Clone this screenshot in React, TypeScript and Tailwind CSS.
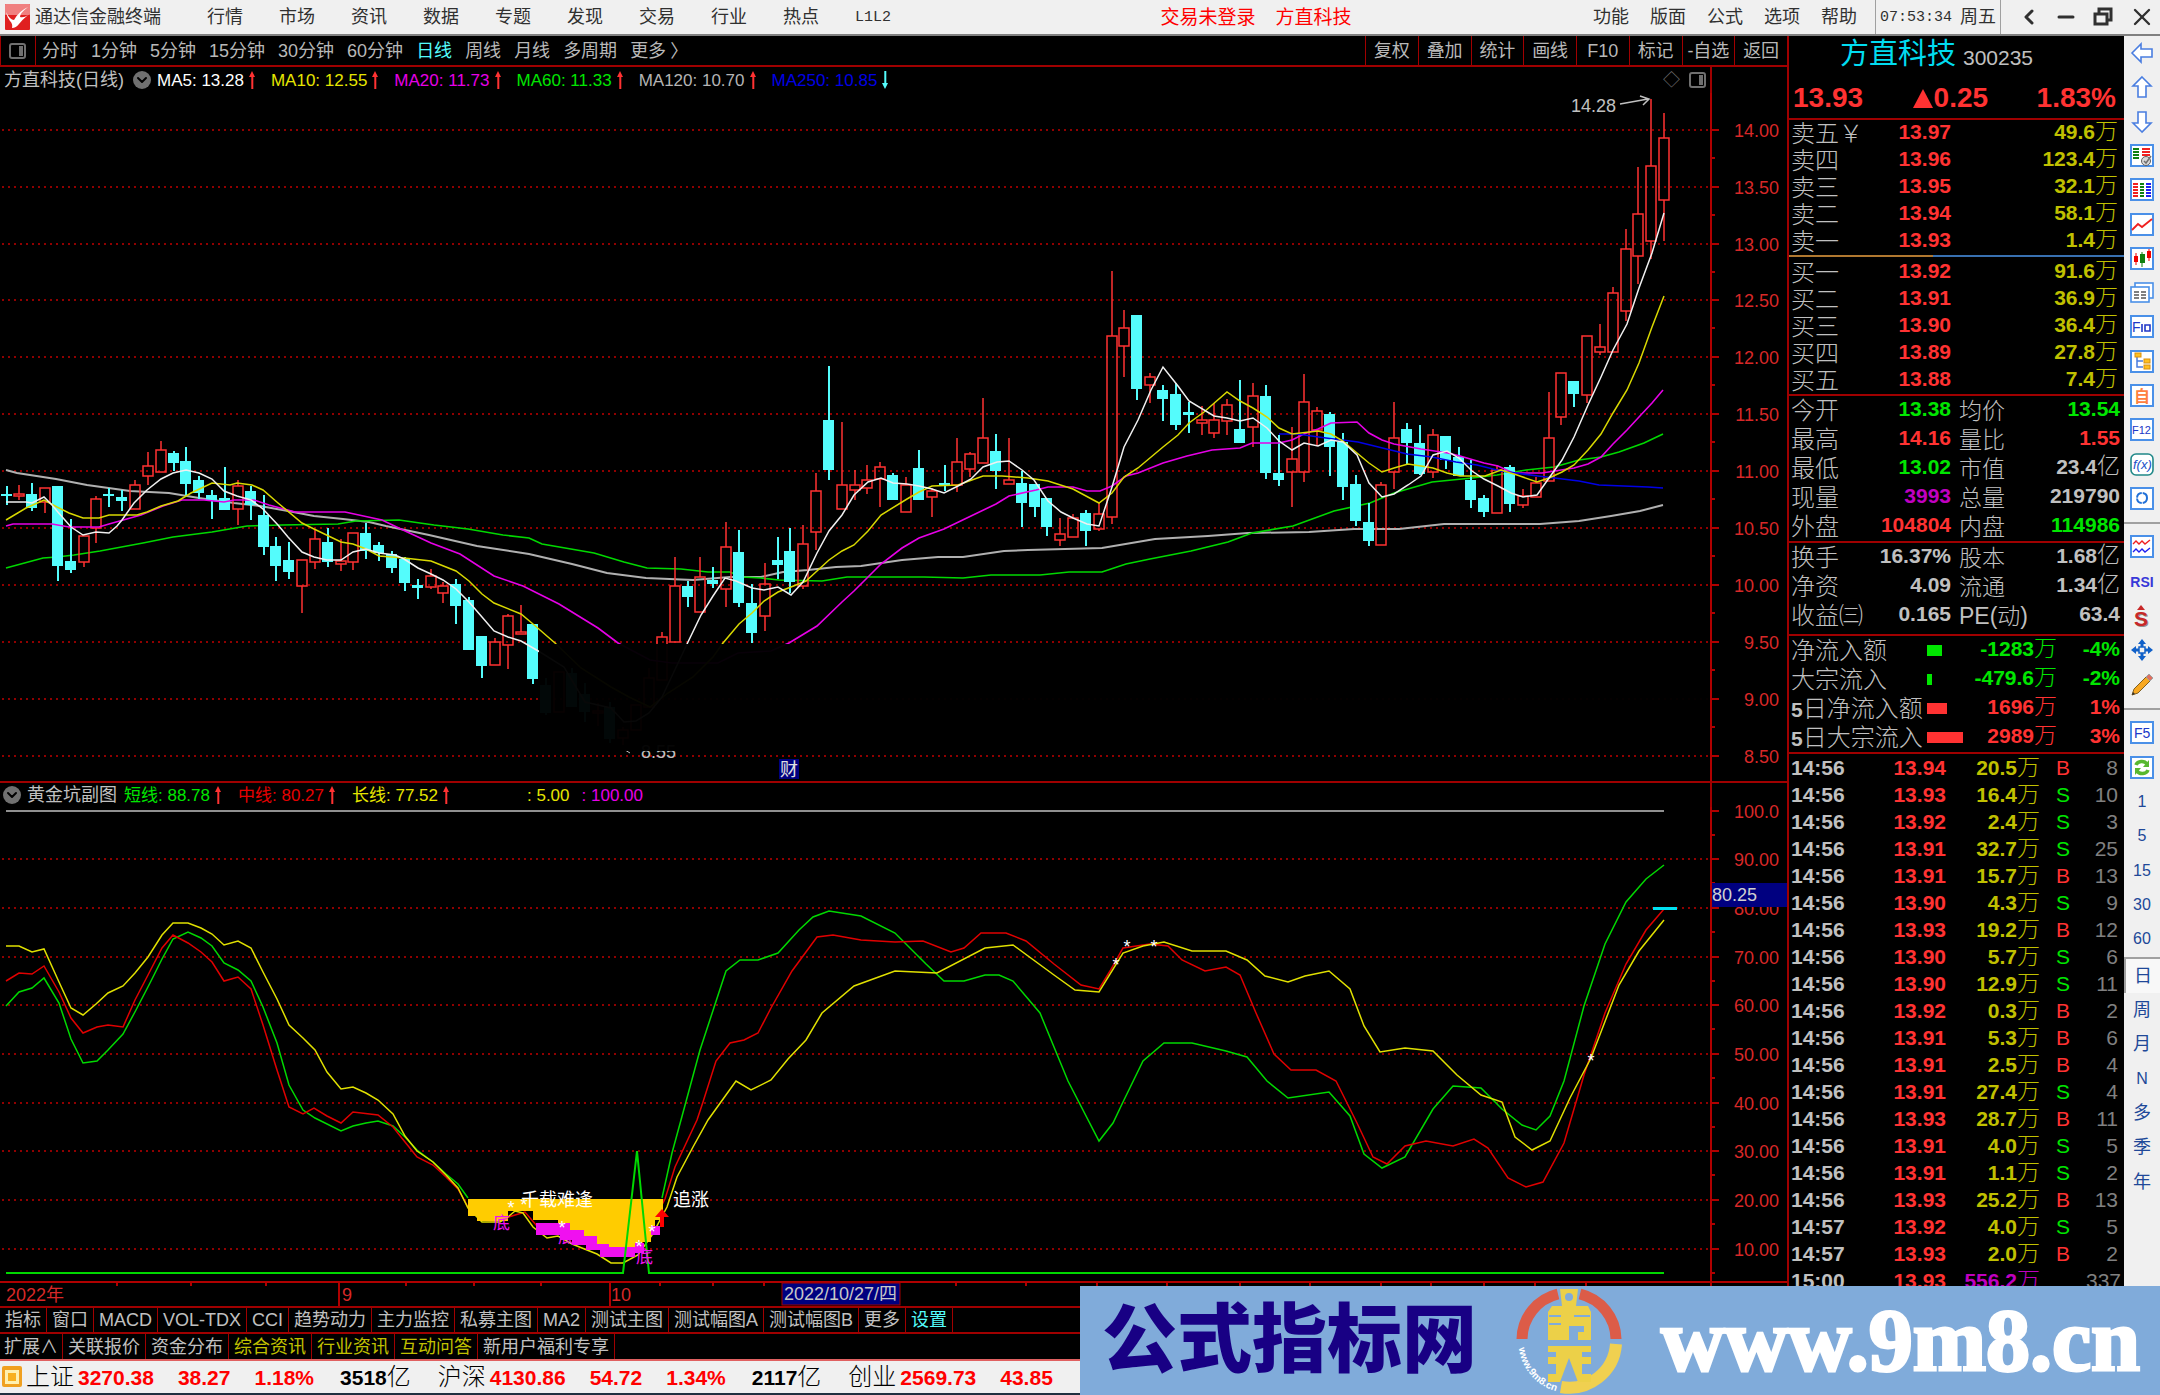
import React from 'react';
import { ChevronDown, ChevronLeft, Minus, X } from 'lucide-react';

const mainMenu = ['行情', '市场', '资讯', '数据', '专题', '发现', '交易', '行业', '热点'];
const rightMenu = ['功能', '版面', '公式', '选项', '帮助'];
const periods = ['分时', '1分钟', '5分钟', '15分钟', '30分钟', '60分钟', '日线', '周线', '月线', '多周期', '更多'];
const chartActions = ['复权', '叠加', '统计', '画线', 'F10', '标记', '-自选', '返回'];

const averages = [
  { label: 'MA5: 13.28', color: 'text-white', up: true },
  { label: 'MA10: 12.55', color: 'text-[#e6e600]', up: true },
  { label: 'MA20: 11.73', color: 'text-[#e600e6]', up: true },
  { label: 'MA60: 11.33', color: 'text-[#00e600]', up: true },
  { label: 'MA120: 10.70', color: 'text-[#b4b4b4]', up: true },
  { label: 'MA250: 10.85', color: 'text-[#0000e6]', up: false }
];

// [high, body top, body bottom, low, up]
const candles = [
  [486, 494, 496, 505, 0], [485, 494, 496, 500, 1], [483, 494, 508, 511, 0], [488, 488, 502, 513, 1], [486, 486, 566, 581, 0],
  [519, 561, 570, 573, 0], [536, 536, 562, 567, 1], [496, 499, 528, 543, 1], [488, 494, 496, 507, 0], [490, 497, 501, 511, 0],
  [480, 485, 509, 509, 1], [452, 466, 476, 485, 1], [441, 450, 472, 472, 1], [451, 453, 463, 471, 0], [447, 461, 484, 496, 0],
  [476, 480, 493, 499, 0], [490, 495, 501, 519, 0], [467, 498, 510, 510, 0], [480, 486, 509, 525, 1], [486, 491, 505, 520, 0],
  [495, 515, 547, 555, 0], [537, 546, 566, 581, 0], [542, 560, 572, 579, 0], [560, 560, 586, 613, 1], [530, 539, 562, 569, 1],
  [528, 542, 562, 567, 0], [539, 561, 564, 571, 1], [533, 533, 562, 570, 1], [523, 533, 551, 559, 0], [542, 545, 553, 561, 0],
  [551, 554, 568, 573, 0], [557, 559, 583, 591, 0], [579, 585, 588, 599, 0], [569, 576, 587, 589, 1], [582, 586, 593, 603, 1],
  [579, 584, 606, 624, 0], [597, 600, 650, 650, 0], [636, 636, 666, 678, 0], [638, 642, 665, 665, 1], [614, 616, 645, 669, 1],
  [605, 632, 634, 634, 1], [624, 624, 679, 684, 0], [678, 685, 713, 715, 0], [672, 672, 712, 712, 1], [668, 673, 707, 707, 0],
  [683, 694, 712, 722, 0], [703, 711, 713, 726, 1], [702, 707, 739, 743, 0], [727, 730, 738, 745, 1], [705, 705, 730, 730, 1],
  [668, 678, 707, 707, 1], [632, 637, 680, 680, 1], [557, 586, 642, 642, 1], [581, 586, 597, 607, 0], [557, 577, 612, 612, 1],
  [567, 580, 584, 588, 0], [522, 547, 589, 607, 1], [530, 552, 603, 607, 0], [584, 603, 633, 643, 0], [563, 584, 616, 631, 1],
  [537, 560, 565, 579, 0], [528, 551, 582, 593, 0], [525, 544, 586, 589, 1], [473, 491, 532, 550, 1], [366, 420, 470, 480, 0],
  [422, 485, 509, 509, 1], [470, 485, 490, 500, 1], [465, 480, 488, 494, 1], [462, 467, 479, 507, 1], [473, 475, 500, 500, 0],
  [477, 485, 512, 512, 1], [450, 468, 500, 500, 0], [488, 491, 497, 517, 1], [465, 483, 486, 491, 0], [438, 462, 485, 492, 1],
  [452, 454, 469, 477, 1], [398, 438, 463, 463, 1], [434, 451, 471, 489, 0], [438, 480, 484, 484, 1], [471, 483, 503, 527, 0],
  [484, 484, 507, 517, 0], [498, 498, 527, 536, 0], [518, 534, 540, 546, 1], [514, 518, 537, 537, 1], [510, 513, 531, 546, 0],
  [503, 514, 529, 531, 1], [271, 336, 517, 524, 1], [310, 328, 346, 377, 1], [315, 315, 389, 400, 0], [373, 377, 385, 403, 1],
  [385, 390, 399, 421, 0], [383, 394, 425, 430, 0], [402, 412, 415, 433, 0], [406, 420, 423, 435, 1], [403, 420, 433, 438, 1],
  [399, 405, 421, 435, 1], [380, 429, 443, 443, 0], [383, 396, 427, 447, 1], [385, 396, 473, 479, 0], [435, 473, 480, 486, 0],
  [427, 459, 472, 507, 1], [374, 402, 472, 482, 1], [407, 411, 430, 446, 1], [412, 414, 447, 476, 0], [433, 442, 487, 500, 0],
  [475, 484, 521, 526, 0], [503, 522, 541, 546, 0], [482, 485, 545, 545, 1], [402, 438, 472, 489, 1], [423, 429, 443, 465, 0],
  [425, 443, 474, 475, 0], [429, 435, 472, 478, 1], [436, 436, 460, 469, 0], [447, 457, 476, 476, 0], [460, 480, 500, 508, 0],
  [495, 498, 512, 517, 0], [465, 470, 513, 513, 1], [465, 467, 504, 512, 0], [489, 496, 505, 508, 1], [477, 483, 497, 497, 1],
  [392, 438, 481, 481, 1], [373, 373, 417, 425, 1], [381, 381, 394, 407, 0], [336, 336, 395, 403, 1], [324, 347, 352, 355, 1],
  [287, 293, 352, 352, 1], [229, 249, 311, 321, 1], [167, 214, 256, 284, 1], [99, 166, 241, 259, 1], [113, 138, 200, 241, 1]
];

const ma5 =
  '6,502 26,502 32,503 44,497 52,505 57,511 71,527 83,535 96,532 109,533 117,526 122,520 134,503 147,490 161,479 173,473 186,470 199,473 212,479 224,491 237,496 251,500 263,509 278,525 288,537 302,552 314,557 327,560 341,560 353,552 366,549 379,553 395,555 404,559 418,568 431,574 443,580 456,589 469,602 482,617 494,631 508,637 521,641 540,652 564,667 585,702 611,708 624,722 636,721 649,713 662,697 688,642 701,615 713,596 725,578 736,581 752,588 764,590 778,587 791,595 803,582 817,553 829,531 842,515 854,495 868,482 881,478 893,483 907,484 919,486 932,489 944,493 958,486 971,479 983,467 997,462 1009,461 1022,470 1034,480 1048,501 1061,512 1073,518 1087,524 1099,526 1112,487 1124,447 1138,420 1151,390 1163,367 1178,386 1189,401 1214,416 1227,418 1240,421 1253,418 1267,428 1279,441 1292,450 1304,443 1318,446 1331,440 1343,442 1357,455 1369,483 1382,497 1394,494 1408,485 1421,476 1433,455 1447,451 1459,458 1472,471 1484,479 1498,486 1511,493 1523,497 1537,495 1549,478 1562,460 1574,437 1588,405 1601,377 1613,350 1627,324 1639,288 1652,253 1664,213';
const ma10 =
  '6,520 26,508 44,500 57,507 69,513 83,518 99,518 109,515 137,515 147,512 161,506 178,501 191,493 212,483 230,485 237,483 252,485 263,490 278,503 302,523 314,529 341,542 353,544 366,549 379,556 404,558 431,561 456,571 469,581 482,594 494,603 521,614 533,624 555,643 581,668 611,687 629,697 650,707 668,693 693,677 713,657 723,643 739,624 752,613 764,601 778,592 791,587 806,581 817,571 829,560 842,551 854,545 868,531 881,515 907,499 919,492 932,486 958,485 983,476 1002,476 1028,478 1048,481 1073,489 1099,503 1112,493 1124,477 1138,468 1163,447 1178,435 1189,423 1204,412 1227,392 1240,401 1253,408 1267,417 1279,428 1292,434 1318,431 1331,434 1343,441 1357,453 1369,463 1382,472 1394,468 1408,464 1421,466 1433,468 1447,473 1460,476 1485,476 1501,470 1517,475 1537,482 1549,478 1562,472 1574,465 1588,450 1601,434 1613,413 1627,390 1639,363 1652,327 1664,296';
const ma20 =
  '6,526 13,524 52,524 69,527 99,527 109,524 141,515 163,506 182,500 204,500 224,502 234,500 254,500 269,505 295,512 345,512 382,520 403,530 431,543 460,554 494,576 523,586 559,604 598,628 618,643 650,660 672,663 718,663 738,653 771,651 789,643 817,626 842,602 854,591 881,564 902,548 919,538 944,529 971,516 996,504 1009,496 1036,490 1048,487 1073,487 1087,491 1100,491 1112,486 1126,476 1138,473 1163,463 1187,456 1212,450 1240,448 1252,443 1279,443 1292,440 1304,434 1318,429 1331,423 1357,422 1369,433 1382,440 1394,444 1421,449 1448,453 1460,456 1484,463 1498,466 1513,473 1542,473 1574,468 1588,464 1601,457 1613,444 1627,430 1639,417 1652,403 1663,390';
const ma60 =
  '6,568 43,558 57,557 74,555 100,551 143,543 173,537 212,532 247,526 282,525 338,524 356,521 399,520 434,525 468,529 503,535 529,538 542,544 594,553 624,562 647,568 681,569 708,572 730,572 742,577 761,578 779,580 822,581 847,577 924,577 963,578 991,575 1040,575 1069,572 1102,572 1126,564 1150,559 1191,551 1228,542 1252,533 1293,526 1334,511 1370,503 1394,493 1432,482 1472,478 1497,475 1526,470 1554,467 1579,460 1601,457 1619,452 1644,443 1663,434';
const ma120 =
  '6,470 17,473 56,479 87,485 130,491 169,493 199,498 234,503 260,506 288,511 314,516 343,519 369,522 386,526 429,535 477,546 529,554 572,564 607,573 646,578 693,580 730,577 761,577 783,572 808,570 836,567 861,566 902,560 938,557 963,557 1004,551 1028,550 1102,548 1155,539 1208,536 1248,533 1309,532 1354,529 1399,529 1444,524 1540,524 1579,521 1611,516 1640,511 1663,505';
const ma250 = '1279,434 1297,434 1326,438 1358,442 1407,454 1432,457 1456,462 1477,465 1501,471 1538,476 1579,481 1599,485 1648,487 1663,488';

const longLine =
  '6,946 19,946 32,952 44,949 59,982 71,1008 83,1015 96,1004 108,993 123,986 135,973 148,957 162,935 173,923 188,923 201,928 212,934 224,945 238,941 251,948 263,972 277,999 289,1025 303,1038 315,1050 327,1072 341,1089 353,1087 366,1093 378,1100 393,1114 405,1136 417,1151 433,1162 446,1175 458,1188 468,1208 482,1222 500,1222 508,1217 515,1211 523,1213 533,1227 547,1238 558,1236 572,1244 597,1254 611,1263 623,1263 638,1255 652,1235 667,1207 677,1177 693,1147 708,1120 736,1081 751,1090 771,1080 788,1059 806,1040 822,1013 854,986 895,971 937,973 985,948 1013,945 1054,975 1075,990 1099,992 1123,953 1143,946 1164,942 1192,951 1226,951 1247,960 1265,976 1288,982 1305,976 1329,971 1350,989 1364,1026 1380,1052 1405,1048 1433,1051 1457,1075 1481,1095 1502,1102 1515,1137 1532,1150 1550,1141 1570,1098 1591,1058 1619,985 1639,951 1664,920';
const midLine =
  '6,981 19,973 32,974 44,966 59,992 71,1018 83,1033 97,1027 108,1025 123,1027 135,1000 148,975 162,948 173,935 188,943 201,952 212,962 224,981 238,977 251,989 263,1025 277,1070 289,1107 303,1114 314,1108 327,1116 341,1123 353,1112 378,1115 393,1127 405,1142 417,1157 433,1165 446,1177 458,1189 468,1207 482,1220 495,1221 525,1212 537,1226 560,1230 600,1247 640,1247 665,1199 675,1167 697,1120 703,1102 716,1061 730,1043 744,1040 758,1033 771,1008 792,971 817,937 833,935 861,940 895,942 923,941 951,952 964,948 981,933 1006,933 1026,941 1054,964 1081,985 1099,989 1110,971 1123,948 1150,944 1168,946 1182,960 1205,971 1226,967 1240,975 1256,1013 1274,1054 1291,1070 1316,1070 1336,1081 1357,1123 1373,1157 1387,1164 1405,1146 1426,1141 1453,1146 1474,1139 1488,1148 1508,1178 1526,1187 1543,1182 1564,1143 1584,1075 1605,1013 1626,964 1646,930 1664,909';
// two runs, broken at the pit
const shortLines = [
  '6,1006 19,992 32,988 44,978 59,1003 71,1039 83,1063 97,1061 108,1050 123,1034 136,1010 150,983 162,959 173,939 188,932 201,938 212,946 224,963 238,970 251,981 263,1007 277,1043 289,1085 303,1110 315,1118 341,1131 353,1126 366,1123 378,1121 393,1126 405,1137 417,1150 433,1162 446,1174 458,1184 468,1198',
  '662,1198 672,1153 681,1120 700,1050 726,971 740,960 758,960 778,953 799,930 813,917 829,911 861,916 895,933 926,964 944,981 964,981 985,975 999,975 1013,981 1040,1013 1068,1081 1099,1141 1113,1123 1123,1102 1143,1061 1164,1043 1192,1043 1226,1051 1247,1057 1267,1081 1288,1098 1329,1092 1350,1116 1364,1154 1382,1168 1405,1157 1433,1109 1453,1086 1481,1088 1502,1109 1522,1125 1536,1130 1550,1116 1564,1081 1584,1006 1605,944 1626,902 1646,879 1664,865'
];

const priceLabels = ['14.00', '13.50', '13.00', '12.50', '12.00', '11.50', '11.00', '10.50', '10.00', '9.50', '9.00', '8.50'];
const oscLabels = ['100.0', '90.00', '80.00', '70.00', '60.00', '50.00', '40.00', '30.00', '20.00', '10.00'];

const sells = [
  ['卖五￥', '13.97', '49.6'], ['卖四', '13.96', '123.4'], ['卖三', '13.95', '32.1'], ['卖二', '13.94', '58.1'], ['卖一', '13.93', '1.4']
];
const buys = [
  ['买一', '13.92', '91.6'], ['买二', '13.91', '36.9'], ['买三', '13.90', '36.4'], ['买四', '13.89', '27.8'], ['买五', '13.88', '7.4']
];

const RED = 'text-[#ff3232]';
const GREEN = 'text-[#00e600]';
const GRAY = 'text-[#c0c0c0]';

const stats = [
  ['今开', '13.38', GREEN, '均价', '13.54', '', GREEN],
  ['最高', '14.16', RED, '量比', '1.55', '', RED],
  ['最低', '13.02', GREEN, '市值', '23.4', '亿', GRAY],
  ['现量', '3993', 'text-[#c000c0]', '总量', '219790', '', GRAY],
  ['外盘', '104804', RED, '内盘', '114986', '', GREEN]
];
const finance = [
  ['换手', '16.37%', GRAY, '股本', '1.68', '亿', GRAY],
  ['净资', '4.09', GRAY, '流通', '1.34', '亿', GRAY],
  ['收益㈢', '0.165', GRAY, 'PE(动)', '63.4', '', GRAY]
];
const flows = [
  { label: '净流入额', bar: 15, value: '-1283', pct: '-4%', color: GREEN, fill: 'bg-[#00e600]' },
  { label: '大宗流入', bar: 5, value: '-479.6', pct: '-2%', color: GREEN, fill: 'bg-[#00e600]' },
  { label: '5日净流入额', bar: 20, value: '1696', pct: '1%', color: RED, fill: 'bg-[#ff3232]' },
  { label: '5日大宗流入', bar: 36, value: '2989', pct: '3%', color: RED, fill: 'bg-[#ff3232]' }
];
const ticks = [
  ['14:56', '13.94', '20.5', 'B', '8'], ['14:56', '13.93', '16.4', 'S', '10'], ['14:56', '13.92', '2.4', 'S', '3'],
  ['14:56', '13.91', '32.7', 'S', '25'], ['14:56', '13.91', '15.7', 'B', '13'], ['14:56', '13.90', '4.3', 'S', '9'],
  ['14:56', '13.93', '19.2', 'B', '12'], ['14:56', '13.90', '5.7', 'S', '6'], ['14:56', '13.90', '12.9', 'S', '11'],
  ['14:56', '13.92', '0.3', 'B', '2'], ['14:56', '13.91', '5.3', 'B', '6'], ['14:56', '13.91', '2.5', 'B', '4'],
  ['14:56', '13.91', '27.4', 'S', '4'], ['14:56', '13.93', '28.7', 'B', '11'], ['14:56', '13.91', '4.0', 'S', '5'],
  ['14:56', '13.91', '1.1', 'S', '2'], ['14:56', '13.93', '25.2', 'B', '13'], ['14:57', '13.92', '4.0', 'S', '5'],
  ['14:57', '13.93', '2.0', 'B', '2'], ['15:00', '13.93', '556.2', '', '337']
];

const indicatorTabs = [
  '指标', '窗口', 'MACD', 'VOL-TDX', 'CCI', '趋势动力', '主力监控', '私募主图', 'MA2', '测试主图', '测试幅图A', '测试幅图B', '更多', '设置'
];
const newsTabs = ['扩展∧', '关联报价', '资金分布', '综合资讯', '行业资讯', '互动问答', '新用户福利专享'];
const indexes = [
  { name: '上证', value: '3270.38', change: '38.27', pct: '1.18%', volume: '3518' },
  { name: '沪深', value: '4130.86', change: '54.72', pct: '1.34%', volume: '2117' },
  { name: '创业', value: '2569.73', change: '43.85' }
];

const Arrow = ({ up }: { up: boolean }) => (
  <svg className={up ? 'text-[#ff3232]' : 'text-[#54fcfc]'} width="9" height="20" viewBox="0 0 9 20">
    {up ? (
      <path d="M4 1 L7 7 H5.3 V19 H3.3 V7 H1 Z" fill="currentColor" />
    ) : (
      <path d="M4 19 L7 13 H5.3 V1 H3.3 V13 H1 Z" fill="currentColor" />
    )}
  </svg>
);

const RoundToggle = ({ label }: { label: string }) => (
  <button aria-label={label} className="flex h-[18px] w-[18px] items-center justify-center rounded-full bg-[#707070] text-black">
    <ChevronDown className="h-4 w-4" strokeWidth={3} />
  </button>
);

const PanelIcon = () => (
  <svg width="20" height="20" viewBox="0 0 20 20">
    <rect x="2" y="3" width="15" height="14" rx="2" fill="none" stroke="#707070" strokeWidth="2" />
    <rect x="11" y="5" width="4" height="10" fill="#707070" />
  </svg>
);

const Amount = ({ value, unit }: { value: string; unit: string }) => (
  <>
    <span className="text-[21px] font-bold leading-none">{value}</span>
    {unit && <span className="text-[23px] font-light leading-none">{unit}</span>}
  </>
);

const TitleBar = () => (
  <header className="flex h-9 items-center justify-between border-b-2 border-[#808080] bg-[#f0f0f0] text-[18px] leading-none text-[#303030]">
    <div className="flex items-center">
      <svg className="mx-[5px]" width="25" height="26" viewBox="0 0 25 26">
        <rect width="25" height="26" rx="1" fill="#e02020" />
        <rect width="25" height="11" rx="1" fill="#f08080" />
        <path d="M1 8 Q5 16 9 16 Q14 7 23 3 Q15 9 15 13 Q19 14 23 11 Q17 16 14 20 Q11 24 7 24 Q8 20 5 17 Q2 13 1 8 Z" fill="#fff" />
      </svg>
      <span>通达信金融终端</span>
      <nav className="ml-[46px] flex items-center gap-9">
        {mainMenu.map((item) => (
          <a key={item} href="#">{item}</a>
        ))}
        <a href="#" className="font-['Liberation_Mono',monospace] text-[15px]">L1L2</a>
      </nav>
    </div>
    <div className="flex gap-5 pl-7 text-[19px] text-[#ff0000]">
      <a href="#">交易未登录</a>
      <a href="#">方直科技</a>
    </div>
    <div className="flex h-full items-center">
      <nav className="flex gap-[21px] pr-[18px]">
        {rightMenu.map((item) => (
          <a key={item} href="#">{item}</a>
        ))}
      </nav>
      <div className="flex h-full w-[126px] items-center justify-center gap-2 border-x border-[#a0a0a0]">
        <span className="font-['Liberation_Mono',monospace] text-[15px]">07:53:34</span>
        <span>周五</span>
      </div>
      <div className="flex items-center gap-[13px] pl-4 pr-1">
        <button aria-label="后退"><ChevronLeft className="h-6 w-6" strokeWidth={3} /></button>
        <button aria-label="最小化"><Minus className="h-6 w-6" strokeWidth={3} /></button>
        <button aria-label="还原">
          <svg width="24" height="24" viewBox="0 0 24 24" fill="none" stroke="currentColor" strokeWidth="3">
            <path d="M8 8 V4 H20 V15 H16" />
            <rect x="4" y="9" width="12" height="10" />
          </svg>
        </button>
        <button aria-label="关闭"><X className="h-7 w-7" strokeWidth={2} /></button>
      </div>
    </div>
  </header>
);

const Toolbar = () => (
  <div className="flex h-[31px] items-stretch justify-between border-b-2 border-[#a00000] text-[18px] leading-none text-[#b8b8b8]">
    <div className="flex items-center">
      <button aria-label="侧栏" className="flex h-full w-9 items-center justify-center border-x border-[#a00000]">
        <PanelIcon />
      </button>
      <div className="flex items-center gap-[13px] pl-[6px]">
        {periods.map((item) => (
          <button key={item} className={item === '日线' ? 'text-[#54fcfc]' : ''}>
            {item}
            {item === '更多' && <span className="pl-1">〉</span>}
          </button>
        ))}
      </div>
    </div>
    <div className="grid w-[422px] grid-cols-8">
      {chartActions.map((item) => (
        <button key={item} className="border-l border-[#a00000]">{item}</button>
      ))}
    </div>
  </div>
);

const xOf = (i: number) => Math.round(6.5 + 12.85 * i);

const CandleChart = () => (
  <svg className="block h-auto w-full" viewBox="0 93 1787 688" fontSize="18">
    {priceLabels.map((label, i) => {
      const y = Math.round(129.7 + i * 56.9);
      return (
        <g key={label}>
          <line x1="2" x2="1711" y1={y} y2={y} stroke="#900000" strokeWidth="2" strokeDasharray="2 4" />
          <line x1="1711" x2="1719" y1={y} y2={y} stroke="#b00000" strokeWidth="2" />
          <line x1="1711" x2="1715" y1={y + 28} y2={y + 28} stroke="#b00000" strokeWidth="2" />
          <text x="1779" y={y + 7} textAnchor="end" fill="#d82828">{label}</text>
        </g>
      );
    })}
    <polyline points={ma120} fill="none" stroke="#b0b0b0" strokeWidth="2" />
    <polyline points={ma60} fill="none" stroke="#00d800" strokeWidth="1.6" />
    {candles.map(([high, top, bottom, low, up], i) => {
      const x = xOf(i);
      const h = Math.max(bottom - top, 2);
      return up ? (
        <g key={i} stroke="#ff3232" strokeWidth="1.5" fill="none">
          <path d={`M${x} ${high} V${top} M${x} ${bottom} V${low}`} />
          <rect x={x - 5} y={top} width="10" height={h} />
        </g>
      ) : (
        <g key={i} fill="#54fcfc">
          <rect x={x - 1} y={high} width="2" height={low - high} />
          <rect x={x - 6} y={top} width="11" height={h} />
        </g>
      );
    })}
    <g fill="none" strokeWidth="1.5">
      <polyline points={ma20} stroke="#e600e6" strokeWidth="1.6" />
      <polyline points={ma250} stroke="#0000e6" strokeWidth="1.6" />
      <polyline points={ma10} stroke="#d8d800" />
      <polyline points={ma5} stroke="#f0f0f0" />
    </g>
    <text x="641" y="758" fill="#c0c0c0">8.55</text>
    <path d="M625 750 L630 753" stroke="#c0c0c0" fill="none" />
    {/* shaded area under 9.50 */}
    <rect x="539" y="644" width="1171" height="107" fill="#000" fillOpacity="0.97" />
    <text x="1571" y="112" fill="#c0c0c0">14.28</text>
    <path d="M1620 104 L1648 99 M1640 96 L1649 99 L1643 105" stroke="#c0c0c0" strokeWidth="1.5" fill="none" />
    <rect x="779" y="759" width="20" height="20" fill="#000080" />
    <text x="780" y="776" fill="#e0e0e0">财</text>
    <line x1="1711" x2="1711" y1="93" y2="781" stroke="#b00000" strokeWidth="2" />
  </svg>
);

const stars = [[511, 1205], [524, 1202], [562, 1225], [639, 1244], [652, 1229], [1116, 962], [1127, 944], [1154, 944], [1591, 1058]];

const dateTicks = [117, 191, 266, 406, 474, 541, 660, 713, 764, 956, 1026, 1097, 1167, 1240, 1310, 1381, 1431, 1484, 1535, 1586];

const OscillatorChart = () => (
  <svg className="block h-auto w-full overflow-visible" viewBox="0 807 1787 499" fontSize="18">
    {oscLabels.map((label, i) => {
      const y = Math.round(810.5 + i * 48.7);
      return (
        <g key={label}>
          {i > 0 && <line x1="2" x2="1711" y1={y} y2={y} stroke="#900000" strokeWidth="2" strokeDasharray="2 4" />}
          <line x1="1711" x2="1719" y1={y} y2={y} stroke="#b00000" strokeWidth="2" />
          <line x1="1711" x2="1715" y1={y + 24} y2={y + 24} stroke="#b00000" strokeWidth="2" />
          <text x="1779" y={y + 7} textAnchor="end" fill="#d82828">{label}</text>
        </g>
      );
    })}
    <line x1="6" x2="1664" y1="811" y2="811" stroke="#909090" strokeWidth="2" />
    <g fill="none" strokeWidth="1.5">
      {shortLines.map((points) => (
        <polyline key={points} points={points} stroke="#00d800" />
      ))}
      <polyline points={midLine} stroke="#e00000" />
      <polyline points={longLine} stroke="#e0e000" />
    </g>
    <path
      d="M468 1199 H663 V1220 H655 V1226 H651 V1242 H638 V1247 H609 V1244 H597 V1236 H584 V1230 H558 V1220 H533 V1211 H508 V1221 H477 V1216 H468 Z"
      fill="#ffcc00"
    />
    <path
      d="M536 1223 H570 V1230 H584 V1236 H597 V1244 H609 V1247 H635 V1243 H644 V1253 H635 V1257 H600 V1250 H586 V1245 H572 V1240 H560 V1235 H536 Z M651 1226 H660 V1235 H651 Z"
      fill="#f010f0"
    />
    <polyline points="6,1273 623,1273 637,1151 649,1273 1664,1273" stroke="#00d800" strokeWidth="2" fill="none" />
    <path d="M662 1209 L669 1217 H664 V1227 H660 V1217 H655 Z" fill="#ff0000" />
    {stars.map(([x, y]) => (
      <text key={x} x={x} y={y + 9} textAnchor="middle" fill="#fff">*</text>
    ))}
    <g fontSize="17" fill="#f010f0">
      <text x="493" y="1229">底</text>
      <text x="558" y="1243">底</text>
      <text x="636" y="1263">底</text>
    </g>
    <text x="521" y="1206" fill="#fff">千载难逢</text>
    <text x="673" y="1206" fill="#fff">追涨</text>
    <rect x="1653" y="907" width="24" height="3" fill="#00e0f0" />
    <rect x="1711" y="883" width="76" height="24" fill="#000080" />
    <text x="1712" y="901" fill="#d0d0d0">80.25</text>
    <path d="M1711 807 V1306 M0 1282 H1787" stroke="#b00000" strokeWidth="2" />
    {dateTicks.map((x) => (
      <line key={x} x1={x} x2={x} y1="1282" y2="1286" stroke="#b00000" strokeWidth="2" />
    ))}
    <path d="M339 1282 V1306 M610 1282 V1306" stroke="#b00000" strokeWidth="2" />
    <text x="6" y="1301" fill="#d82828">2022年</text>
    <text x="342" y="1301" fill="#d82828">9</text>
    <text x="611" y="1301" fill="#d82828">10</text>
    <rect x="782" y="1283" width="118" height="22" fill="#000080" stroke="#a00000" />
    <text x="784" y="1300" fill="#c8c8c8">2022/10/27/四</text>
  </svg>
);

const OrderRows = ({ rows }: { rows: string[][] }) => (
  <table className="w-full table-fixed">
    <tbody>
      {rows.map(([label, price, amount]) => (
        <tr key={label} className="h-[27px] leading-[26px]">
          <td className="w-[82px] pl-[2px] text-2xl font-light leading-[26px] text-[#c0c0c0]">{label}</td>
          <td className="w-[80px] text-right leading-[26px] text-[#ff3232]"><Amount value={price} unit="" /></td>
          <td className="pr-[6px] text-right leading-[26px] text-[#c0c000]"><Amount value={amount} unit="万" /></td>
        </tr>
      ))}
    </tbody>
  </table>
);

const StatRows = ({ rows }: { rows: string[][] }) => (
  <table className="w-full table-fixed">
    <tbody>
      {rows.map(([label, value, color, label2, value2, unit2, color2]) => (
        <tr key={label} className="h-[29px] leading-7">
          <td className="w-[74px] whitespace-nowrap pl-[2px] text-2xl font-light leading-7 text-[#c0c0c0]">{label}</td>
          <td className={`w-[88px] text-right leading-7 ${color}`}><Amount value={value} unit="" /></td>
          <td className="w-[74px] pl-2 text-[23px] font-light leading-7 text-[#c0c0c0]">{label2}</td>
          <td className={`pr-1 text-right leading-7 ${color2}`}><Amount value={value2} unit={unit2} /></td>
        </tr>
      ))}
    </tbody>
  </table>
);

const QuotePanel = () => (
  <aside className="w-[337px] shrink-0 overflow-hidden border-l-2 border-[#a00000]">
    <div className="h-[84px] border-b-2 border-[#a00000] px-1">
      <h1 className="flex items-end justify-center gap-[7px] pr-10 text-[#00dcf0]">
        <span className="text-[29px] leading-9">方直科技</span>
        <span className="text-[21px] leading-[28px] text-[#c0c0c0]">300235</span>
      </h1>
      <div className="flex items-center justify-between pt-[5px] pr-1 text-[28px] font-bold leading-[42px] text-[#ff3232]">
        <span>13.93</span>
        <span className="flex items-center">
          <svg width="22" height="22" viewBox="0 0 22 22"><path d="M11 2 L21 21 H1 Z" fill="currentColor" /></svg>
          0.25
        </span>
        <span>1.83%</span>
      </div>
    </div>
    <OrderRows rows={sells} />
    <div className="flex h-[2px]">
      <div className="w-[43%] bg-[#b07830]" />
      <div className="flex-1 bg-[#3870b0]" />
    </div>
    <div className="border-b-2 border-[#a00000] pt-[2px]">
      <OrderRows rows={buys} />
    </div>
    <div className="border-b-2 border-[#a00000]">
      <StatRows rows={stats} />
    </div>
    <div className="border-b-2 border-[#a00000] pb-1">
      <StatRows rows={finance} />
    </div>
    <div className="border-b-2 border-[#a00000]">
      <table className="w-full table-fixed">
        <tbody>
          {flows.map((row) => (
            <tr key={row.label} className="h-[29px]">
              <td className="w-[138px] whitespace-nowrap pl-[2px] text-2xl font-light leading-7 text-[#c0c0c0]">
                {row.label.startsWith('5') ? <><span className="text-[21px] font-bold leading-none">5</span>{row.label.slice(1)}</> : row.label}
              </td>
              <td className="w-9"><div className={`h-[11px] ${row.fill}`} style={{ width: row.bar }} /></td>
              <td className={`w-[94px] text-right leading-7 ${row.color}`}><Amount value={row.value} unit="万" /></td>
              <td className={`pr-1 text-right leading-7 ${row.color}`}><Amount value={row.pct} unit="" /></td>
            </tr>
          ))}
        </tbody>
      </table>
    </div>
    <table className="w-full table-fixed">
      <tbody>
        {ticks.map(([time, price, amount, side, count], i) => (
          <tr key={i} className="h-[27px] text-[21px] leading-[26px]">
            <td className="w-[76px] pl-[2px] font-bold text-[#c0c0c0]">{time}</td>
            <td className="w-[81px] text-right font-bold text-[#ff3232]">{price}</td>
            <td className={`w-[94px] text-right ${side ? 'text-[#c0c000]' : 'text-[#c000c0]'}`}><Amount value={amount} unit="万" /></td>
            <td className={`w-[46px] text-center ${side === 'B' ? 'text-[#ff3232]' : 'text-[#00e600]'}`}>{side}</td>
            <td className="pr-[6px] text-right text-[#808080]">{count}</td>
          </tr>
        ))}
      </tbody>
    </table>
  </aside>
);

const Framed = ({ children }: { children: React.ReactNode }) => (
  <svg width="24" height="24" viewBox="0 0 24 24">
    <rect x="1" y="1" width="22" height="21" fill="#fff" stroke="#4a90e8" strokeWidth="2" />
    {children}
  </svg>
);

const arrowShape = 'M2 12 L11 3 V8 H22 V16 H11 V21 Z';
const BlockArrow = ({ turn }: { turn: number }) => (
  <svg width="24" height="24" viewBox="0 0 24 24">
    <path d={arrowShape} fill="#fff" stroke="#4a7ee0" strokeWidth="1.6" transform={`rotate(${turn} 12 12)`} />
  </svg>
);

const bars = (x: number, w: number, color: string, rows: number[]) =>
  rows.map((y) => <rect key={`${x}-${y}`} x={x} y={y} width={w} height="2" fill={color} />);

const toolIcons: [string, React.ReactNode][] = [
  ['返回', <BlockArrow turn={0} />],
  ['上一个', <BlockArrow turn={90} />],
  ['下一个', <BlockArrow turn={270} />],
  ['列表', <Framed>{bars(3, 6, '#108010', [4, 7, 10, 13])}{bars(12, 8, '#f02020', [4, 7, 10])}<circle cx="16" cy="17" r="4.5" fill="#d8d8d8" stroke="#606060" /><path d="M14 17 L16 19 L21 12" fill="none" stroke="#707070" strokeWidth="1.5" /></Framed>],
  ['报价', <Framed>{bars(3, 5, '#f02020', [5, 8, 11, 14, 17])}{bars(10, 4, '#108010', [5, 8, 11, 14, 17])}{bars(16, 5, '#2020f0', [5, 8, 11, 14, 17])}</Framed>],
  ['分时图', <Framed><path d="M2 17 L8 11 L12 14 L22 6" fill="none" stroke="#f02020" strokeWidth="1.8" /></Framed>],
  ['K线图', <Framed><path d="M6 6 V18 M19 2 V14" stroke="#f00000" /><path d="M12 5 V20" stroke="#108010" /><rect x="4" y="9" width="4" height="6" fill="#f00000" /><rect x="10" y="7" width="5" height="9" fill="#108010" /><rect x="17" y="4" width="4" height="7" fill="#f00000" /></Framed>],
  ['多窗口', <svg width="24" height="24" viewBox="0 0 24 24"><rect x="5" y="2" width="18" height="15" fill="#fff" stroke="#4a90e8" strokeWidth="1.6" /><rect x="1" y="6" width="18" height="15" fill="#fff" stroke="#4a90e8" strokeWidth="1.6" />{bars(4, 5, '#808080', [10, 13, 16])}{bars(11, 5, '#808080', [10, 13, 16])}</svg>],
  ['F10', <Framed><text x="2" y="17" fontSize="14" fill="#2038c8">F</text><path d="M12 9 V17 M15 10 H20 V16 H15 Z" stroke="#2038c8" strokeWidth="1.6" fill="none" /></Framed>],
  ['板块', <Framed><path d="M7 7 V17 H13 M7 11 H13" stroke="#4a7ee0" strokeWidth="1.5" fill="none" /><g fill="#ffc020" stroke="#d89010"><rect x="5" y="3" width="6" height="4" /><rect x="14" y="9" width="6" height="4" /><rect x="14" y="15" width="6" height="4" /></g></Framed>],
  ['自选', <Framed><text x="4" y="18" fontSize="16" fontWeight="bold" fill="#ff8040">自</text></Framed>],
  ['F12', <Framed><text x="2" y="16" fontSize="11" fill="#2038c8">F12</text></Framed>],
  ['公式', <svg width="24" height="24" viewBox="0 0 24 24"><rect x="1" y="1" width="22" height="21" rx="5" fill="#fff" stroke="#208888" strokeWidth="1.6" /><text x="3" y="16" fontSize="13" fontStyle="italic" fill="#2050c8">f(x)</text></svg>],
  ['区间', <Framed><circle cx="12" cy="11" r="5" fill="none" stroke="#2070d8" strokeWidth="2" strokeDasharray="6.9 1" /></Framed>]
];

const drawIcons: [string, React.ReactNode][] = [
  ['叠加线', <Framed><path d="M3 9 L6 6 L9 9 L12 6 L15 9 L20 5" fill="none" stroke="#f02020" strokeWidth="1.4" /><path d="M3 17 L6 14 L9 17 L12 14 L15 17 L20 13" fill="none" stroke="#2020f0" strokeWidth="1.4" /></Framed>],
  ['RSI', <span className="text-[14px] font-bold leading-none text-[#3838d8]">RSI</span>],
  ['资金', <svg width="24" height="24" viewBox="0 0 24 24"><text x="5" y="23" fontSize="21" fontWeight="bold" fill="#909090">S</text><text x="4" y="22" fontSize="21" fontWeight="bold" fill="#c82828">S</text><path d="M11 1 L15 6 H7 Z" fill="#c82828" /></svg>],
  ['移动', <svg width="24" height="24" viewBox="0 0 24 24" fill="#1060c8"><path d="M12 1 L16 6 H8 Z M12 23 L16 18 H8 Z M1 12 L6 8 V16 Z M23 12 L18 8 V16 Z" /><path d="M12 5 V19 M5 12 H19" stroke="#1060c8" strokeWidth="3" /><rect x="9" y="9" width="6" height="6" fill="#f0f0f0" stroke="#1060c8" strokeWidth="1.5" /></svg>],
  ['画笔', <svg width="24" height="24" viewBox="0 0 24 24"><path d="M2 22 L4 16 L16 4 L20 8 L8 20 Z" fill="#f8a820" stroke="#806020" /><path d="M16 4 L19 1 L23 5 L20 8 Z" fill="#e07060" stroke="#a0a0a0" /><path d="M2 22 L3 19 L5 21 Z" fill="#303030" /></svg>]
];

const periodIcons: [string, React.ReactNode][] = [
  ['F5', <Framed><text x="4" y="17" fontSize="14" fill="#2038c8">F5</text></Framed>],
  ['刷新', <Framed><path d="M6 9 A6 5 0 0 1 17 8 M18 14 A6 5 0 0 1 7 15" fill="none" stroke="#58b830" strokeWidth="3.5" /><path d="M19 4 V11 H13 Z M5 19 V12 H11 Z" fill="#58b830" /></Framed>],
  ...['1', '5', '15', '30', '60', '日', '周', '月', 'N', '多', '季', '年'].map(
    (t): [string, React.ReactNode] => [t, <span className={/[0-9N]/.test(t) ? 'text-base' : 'text-lg leading-none'}>{t}</span>]
  )
];

const StripGroup = ({ items, height }: { items: [string, React.ReactNode][]; height: string }) => (
  <div className={`flex flex-col ${height}`}>
    {items.map(([name, icon]) => (
      <button
        key={name}
        aria-label={name}
        className={`flex flex-1 items-center justify-center ${name === '日' ? 'border-l-2 border-t-2 border-[#a0a0a0] bg-[#f8f8f8]' : ''}`}
      >
        {icon}
      </button>
    ))}
  </div>
);

const SideStrip = () => (
  <div className="w-9 shrink-0 bg-[#f0f0f0] text-[#204898]">
    <StripGroup items={toolIcons} height="h-[480px]" />
    <hr className="my-[6px] border-t-2 border-[#a0a0a0]" />
    <StripGroup items={drawIcons} height="h-[172px]" />
    <hr className="my-[6px] border-t-2 border-[#a0a0a0]" />
    <StripGroup items={periodIcons} height="h-[483px]" />
  </div>
);

const BottomTabs = () => (
  <>
    <div className="flex h-[26px] border-t-2 border-[#a00000] text-[18px] leading-6 text-[#c0c0c0]">
      {indicatorTabs.map((tab) => (
        <button
          key={tab}
          className={`whitespace-nowrap border-r border-[#a00000] px-[5px] ${tab === '设置' ? 'text-[#54fcfc]' : ''}`}
        >
          {tab}
        </button>
      ))}
    </div>
    <div className="flex h-[27px] border-t-2 border-[#a00000] text-[18px] leading-6 text-[#c0c0c0]">
      {newsTabs.map((tab, i) => (
        <button
          key={tab}
          className={`whitespace-nowrap border-r border-[#a00000] ${i === 0 ? 'px-1' : 'px-[5px]'} ${i > 2 && i < 6 ? 'text-[#c0c000]' : ''}`}
        >
          {tab}
        </button>
      ))}
    </div>
  </>
);

const Ticker = () => (
  <footer className="flex h-9 items-center border-b-2 border-t-2 border-b-[#203040] border-t-[#e06060] bg-[#f0f0f0] text-[21px] font-bold leading-none">
    <svg className="mr-[3px] ml-[1px]" width="22" height="24" viewBox="0 0 22 24">
      <rect x="1" y="1" width="20" height="21" rx="2" fill="#f0a020" />
      <rect x="4" y="5" width="14" height="14" fill="#fff0b0" />
      <rect x="7" y="8" width="8" height="8" fill="#f8b020" />
    </svg>
    {indexes.map((item) => (
      <div key={item.name} className="flex items-center pr-[27px] text-[#ff0000]">
        <span className="pr-1 text-2xl font-light leading-none text-black">{item.name}</span>
        <span className="pr-6">{item.value}</span>
        <span className="pr-6">{item.change}</span>
        {item.pct && (
          <>
            <span className="pr-[26px]">{item.pct}</span>
            <span className="text-black">{item.volume}</span>
            <span className="text-2xl font-light leading-none text-black">亿</span>
          </>
        )}
      </div>
    ))}
  </footer>
);

const Banner = () => (
  <div className="absolute bottom-0 right-0 flex h-[109px] w-1/2 items-center justify-between bg-[#80abda] pl-[22px] pr-5">
    <span className="whitespace-nowrap text-[75px] font-black leading-none text-[#180084]">公式指标网</span>
    <svg width="106" height="106" viewBox="0 0 106 106">
      <path d="M6 51 A47 47 0 0 1 42 6" fill="none" stroke="#dc5c48" strokeWidth="11" />
      <path d="M64 6 A47 47 0 0 1 100 51" fill="none" stroke="#dc5c48" strokeWidth="11" />
      <path d="M100 56 A47 47 0 0 1 45 99" fill="none" stroke="#f0d050" strokeWidth="12" />
      <path d="M44 1 H62 L60 18 H72 L75 24 V52 H62 V44 H68 V38 H53 V52 H32 V24 L36 18 H46 Z" fill="#ecd048" />
      <circle cx="53" cy="9" r="4" fill="#80abda" />
      <path d="M33 28 H45 M33 36 H45 M58 28 H74" stroke="#80abda" strokeWidth="2" />
      <path d="M32 58 H75 V64 H66 V69 H75 V76 H66 V86 H75 V94 H62 L53 70 L44 94 H32 V86 H40 V76 H32 V69 H40 V64 H32 Z" fill="#ecd048" />
      <path id="coinArc" d="M3 60 A51 51 0 0 0 43 104" fill="none" />
      <text fontSize="10" fontWeight="bold" fill="#fff"><textPath href="#coinArc">www.9m8.cn</textPath></text>
    </svg>
    <span className="whitespace-nowrap font-['Liberation_Serif',serif] text-[88px] font-bold leading-none text-white [-webkit-text-stroke:3px_white]">www.9m8.cn</span>
  </div>
);

const App = () => {
  return (
    <div className="relative overflow-hidden bg-black font-['Liberation_Sans','Noto_Sans_CJK_SC',sans-serif]">
      <TitleBar />
      <div className="flex">
        <main className="min-w-0 flex-1">
          <Toolbar />
          <div className="flex h-[26px] items-stretch text-[17px] leading-none">
            <div className="flex flex-1 items-center border-r-2 border-[#a00000] pl-1 pr-[2px]">
              <span className="pr-[9px] text-[18px] text-[#c0c0c0]">方直科技(日线)</span>
              <RoundToggle label="主图设置" />
              <div className="flex flex-1 items-center gap-[14px] pl-[6px]">
                {averages.map((ma) => (
                  <span key={ma.label} className={`flex items-center gap-1 ${ma.color}`}>
                    {ma.label}
                    <Arrow up={ma.up} />
                  </span>
                ))}
              </div>
              <span className="pr-2 text-[#707070]">◇</span>
              <PanelIcon />
            </div>
            <div className="w-[75px]" />
          </div>
          <CandleChart />
          <div className="flex h-[26px] items-stretch border-t-2 border-[#a00000] text-[17px] leading-none">
            <div className="flex flex-1 items-center border-r-2 border-[#a00000] pl-[3px]">
              <RoundToggle label="副图设置" />
              <span className="pl-[6px] pr-[7px] text-[18px] text-[#c0c0c0]">黄金坑副图</span>
              <div className="flex items-center gap-[15px]">
                <span className="flex items-center gap-1 text-[#00e600]">短线: 88.78<Arrow up /></span>
                <span className="flex items-center gap-1 text-[#e60000]">中线: 80.27<Arrow up /></span>
                <span className="flex items-center gap-1 text-[#e6e600]">长线: 77.52<Arrow up /></span>
              </div>
              <span className="pl-[76px] pr-3 text-[#e6e600]">: 5.00</span>
              <span className="text-[#e600e6]">: 100.00</span>
            </div>
            <div className="w-[75px]" />
          </div>
          <OscillatorChart />
          <BottomTabs />
        </main>
        <div className="relative flex w-[373px] shrink-0">
          <div className="absolute inset-0 flex overflow-hidden">
            <QuotePanel />
            <SideStrip />
          </div>
        </div>
      </div>
      <Ticker />
      <Banner />
    </div>
  );
};

export default App;
